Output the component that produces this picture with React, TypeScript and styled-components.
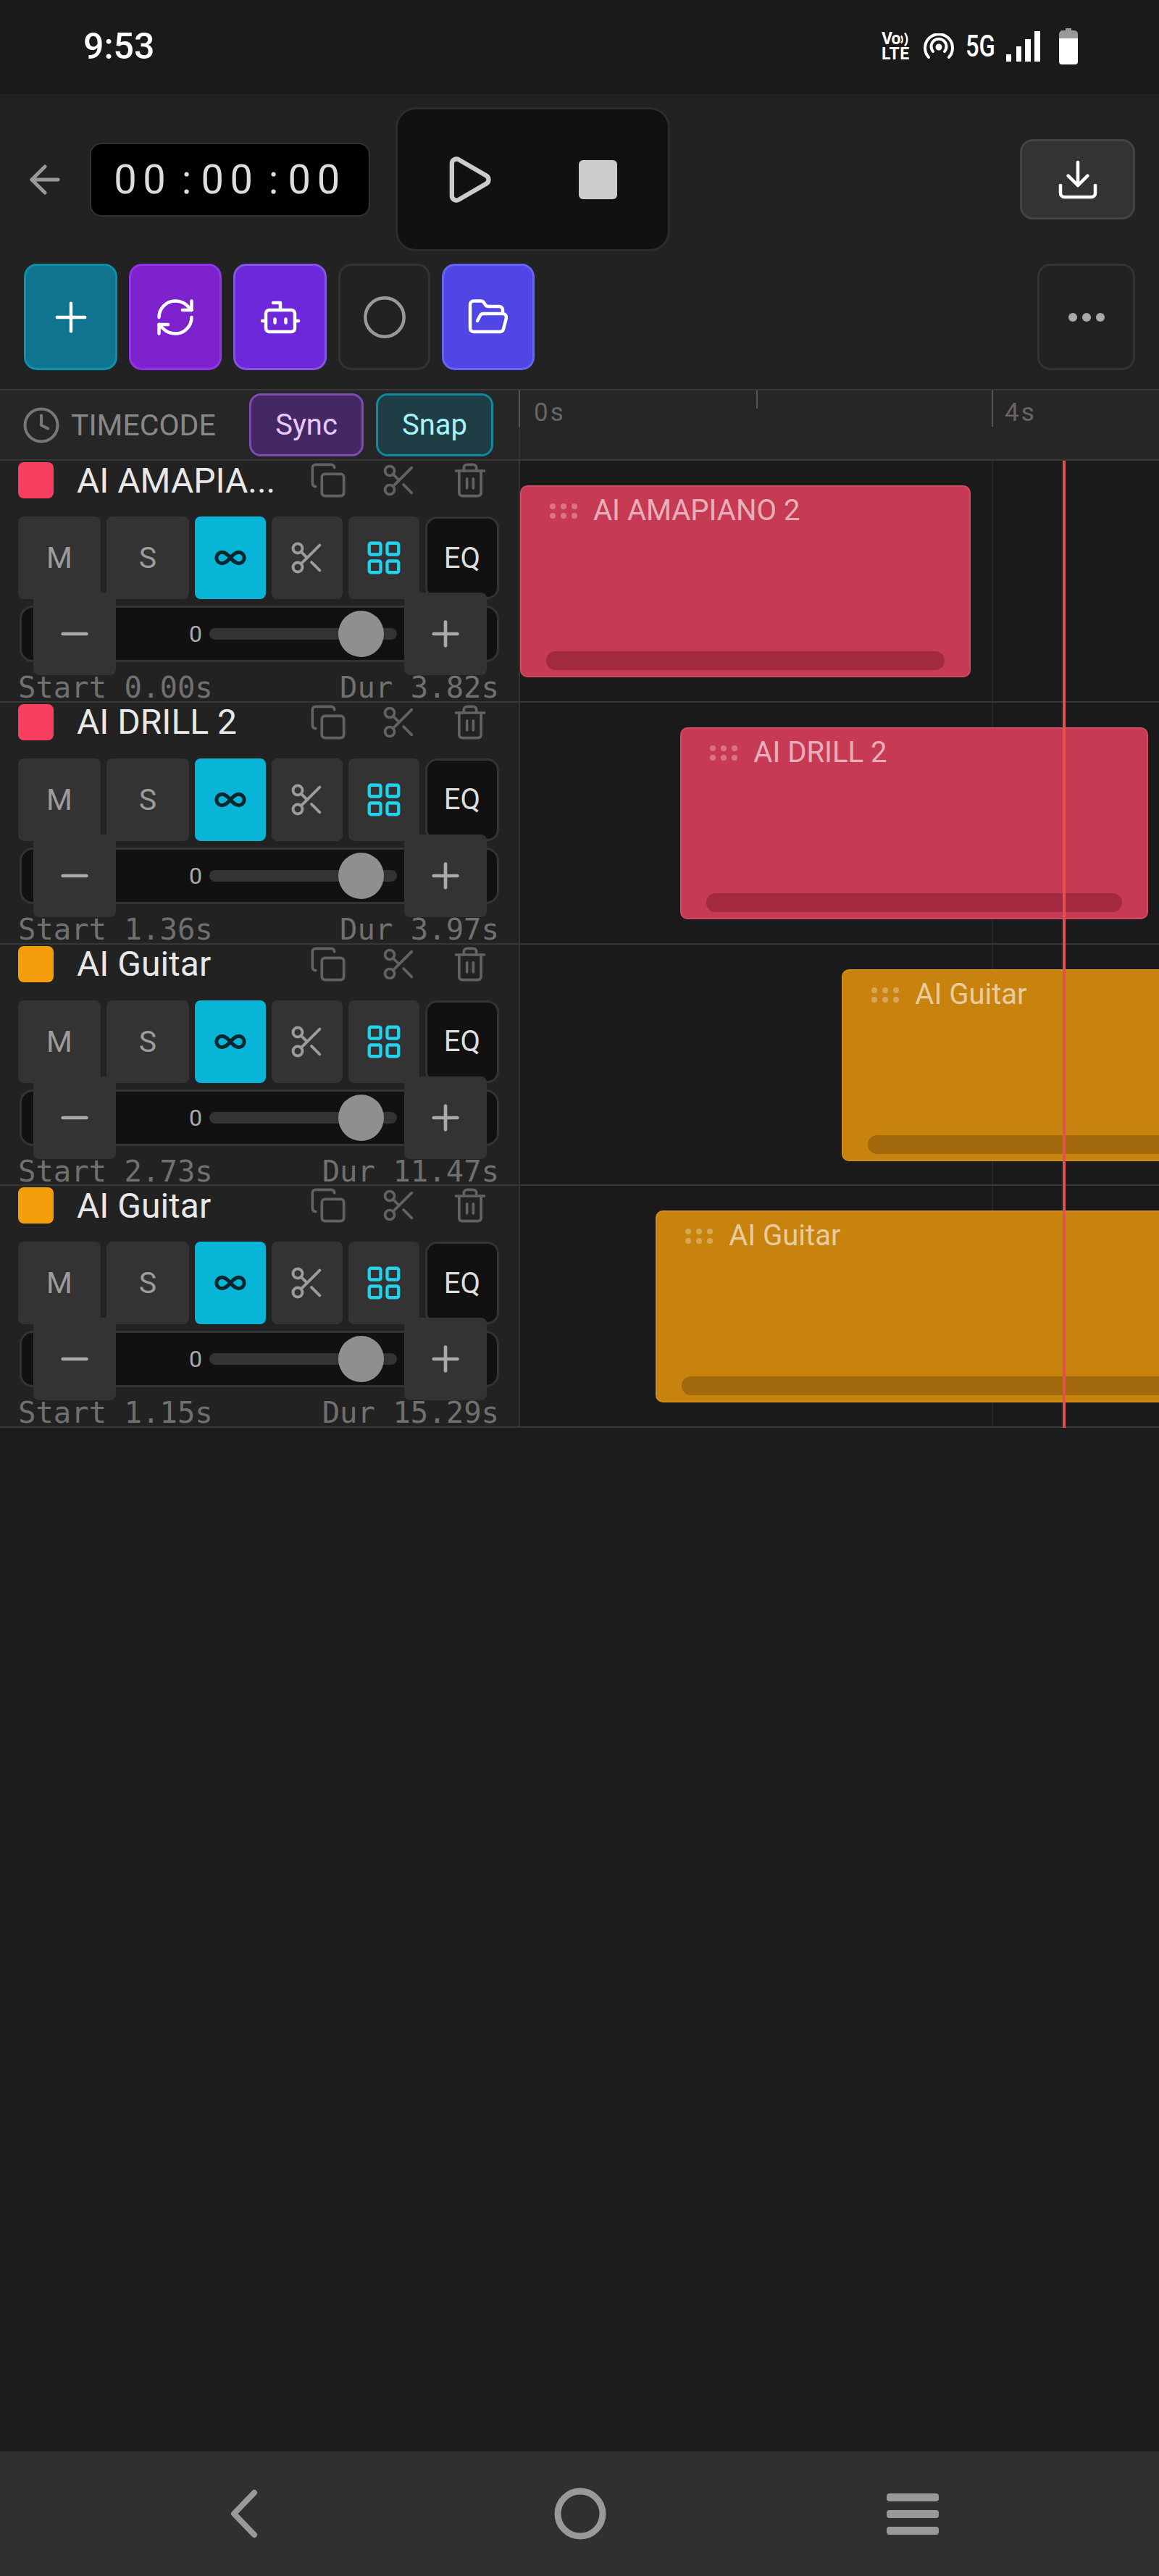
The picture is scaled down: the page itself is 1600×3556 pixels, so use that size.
import React from 'react';
import styled, { createGlobalStyle } from 'styled-components';
import {
  ArrowLeft,
  Bot,
  Circle,
  Clock,
  Copy,
  Download,
  FolderOpen,
  Infinity as InfinityIcon,
  LayoutGrid,
  Minus,
  Play,
  Plus,
  RefreshCw,
  Scissors,
  Trash2,
} from 'lucide-react';

const PX_PER_SECOND = 162.75;
const PLAYHEAD_X = 1467;

type TrackData = {
  short: string;
  name: string;
  start: number;
  dur: number;
  tone: 'rose' | 'amber';
};

const TRACKS: TrackData[] = [
  { short: 'AI AMAPIA...', name: 'AI AMAPIANO 2', start: 0, dur: 3.82, tone: 'rose' },
  { short: 'AI DRILL 2', name: 'AI DRILL 2', start: 1.36, dur: 3.97, tone: 'rose' },
  { short: 'AI Guitar', name: 'AI Guitar', start: 2.73, dur: 11.47, tone: 'amber' },
  { short: 'AI Guitar', name: 'AI Guitar', start: 1.15, dur: 15.29, tone: 'amber' },
];

const TONES = {
  rose: { swatch: '#f93f60', clip: '#c63a54', edge: '#d14a63', bar: '#a32a3e' },
  amber: { swatch: '#f59e0b', clip: '#c8820e', edge: '#d08c1c', bar: '#a1690c' },
};

const TOOL_TONES = {
  teal: { bg: '#0e7490', border: '#0e8fae' },
  fuchsia: { bg: '#7e22ce', border: '#9333ea' },
  violet: { bg: '#6d28d9', border: '#8355e0' },
  ghost: { bg: 'transparent', border: '#333333' },
  indigo: { bg: '#4f46e5', border: '#6366f1' },
};

const GlobalStyle = createGlobalStyle`
  html, body {
    margin: 0;
    padding: 0;
    background: #1c1c1c;
  }
  * {
    box-sizing: border-box;
  }
`;

const Page = styled.div`
  width: 1600px;
  height: 3556px;
  display: flex;
  flex-direction: column;
  overflow: hidden;
  background: #1c1c1c;
  font-family: Roboto, 'Liberation Sans', sans-serif;
`;

const StatusBar = styled.div`
  height: 130px;
  display: flex;
  align-items: center;
  justify-content: space-between;
  padding: 0 112px 0 115px;
  background: #1a1a1a;
  color: #ffffff;
`;

const Time = styled.span`
  font-size: 50px;
  font-weight: 500;
  margin-top: -2px;
`;

const StatusIcons = styled.div`
  display: flex;
  align-items: center;
  gap: 16px;
  margin-top: -2px;
`;

const Volte = styled.div`
  width: 42px;
  font-size: 23px;
  line-height: 21px;
  font-weight: 700;
  letter-spacing: 0.5px;
`;

const VolteTop = styled.div`
  display: flex;
  align-items: center;
  letter-spacing: -1px;
`;

const FiveG = styled.span`
  width: 40px;
  font-size: 42px;
  line-height: 42px;
  font-weight: 500;
  white-space: nowrap;
  transform: scaleX(0.78);
  transform-origin: left center;
`;

const BatteryWrap = styled.div`
  display: flex;
  margin-left: 10px;
`;

const Toolbar = styled.div`
  height: 407px;
  display: flex;
  flex-direction: column;
  gap: 17px;
  padding: 18px 33px 0 0;
  background: #222222;
`;

const TransportRow = styled.div`
  display: flex;
  align-items: center;
  padding-left: 31px;
`;

const BackButton = styled.div`
  display: flex;
  width: 62px;
  margin-right: 31px;
  color: #999999;
`;

const TimeDisplay = styled.div`
  width: 387px;
  height: 102px;
  display: flex;
  align-items: center;
  justify-content: center;
  background: #000000;
  border: 2px solid #333333;
  border-radius: 16px;
  color: #dddddd;
  font-size: 56px;
  letter-spacing: 8.6px;
  font-variant-numeric: tabular-nums;
`;

const TimeColon = styled.span`
  display: inline-block;
  width: 40px;
  letter-spacing: 0;
  text-align: center;
`;

const TransportPanel = styled.div`
  width: 379px;
  height: 199px;
  margin-left: 35px;
  display: flex;
  align-items: center;
  gap: 115px;
  padding-left: 59px;
  background: #111111;
  border: 3px solid #2c2c2c;
  border-radius: 28px;
  color: #cccccc;
`;

const StopSquare = styled.div`
  width: 53px;
  height: 54px;
  border-radius: 6px;
  background: #cccccc;
`;

const SaveButton = styled.div`
  width: 159px;
  height: 111px;
  margin-left: auto;
  display: flex;
  align-items: center;
  justify-content: center;
  background: #333333;
  border: 3px solid #444444;
  border-radius: 18px;
  color: #ffffff;
`;

const ToolRow = styled.div`
  display: flex;
  gap: 16px;
  padding-left: 33px;
`;

const ToolButton = styled.div<{ $tone: keyof typeof TOOL_TONES; $width: number }>`
  width: ${(p) => p.$width}px;
  height: 147px;
  display: flex;
  align-items: center;
  justify-content: center;
  background: ${(p) => TOOL_TONES[p.$tone].bg};
  border: 3px solid ${(p) => TOOL_TONES[p.$tone].border};
  border-radius: 18px;
  color: #ffffff;
`;

const MoreButton = styled.div`
  width: 135px;
  height: 147px;
  margin-left: auto;
  display: flex;
  align-items: center;
  justify-content: center;
  gap: 7px;
  border: 3px solid #333333;
  border-radius: 18px;
`;

const MoreDot = styled.span`
  width: 12px;
  height: 12px;
  border-radius: 50%;
  background: #aaaaaa;
`;

const HeaderRow = styled.div`
  height: 99px;
  display: flex;
  background: #262626;
  border-top: 2px solid #383838;
  border-bottom: 2px solid #383838;
`;

const HeaderLeft = styled.div`
  width: 718px;
  display: flex;
  align-items: center;
  padding-left: 30px;
  border-right: 2px solid #333333;
`;

const ClockWrap = styled.div`
  display: flex;
  color: #777777;
`;

const TimecodeLabel = styled.span`
  margin-left: 14px;
  width: 246px;
  font-size: 41px;
  color: #888888;
`;

const Chip = styled.div<{ $bg: string; $border: string; $color: string; $width: number }>`
  width: ${(p) => p.$width}px;
  height: 87px;
  margin-right: 17px;
  display: flex;
  align-items: center;
  justify-content: center;
  background: ${(p) => p.$bg};
  border: 3px solid ${(p) => p.$border};
  border-radius: 16px;
  color: ${(p) => p.$color};
  font-size: 40px;
`;

const Ruler = styled.div`
  flex: 1;
  position: relative;
`;

const Tick = styled.div<{ $major?: boolean }>`
  position: absolute;
  top: 0;
  width: 2px;
  height: ${(p) => (p.$major ? 50 : 25)}px;
  background: #555555;
`;

const TickLabel = styled.span`
  position: absolute;
  top: 10px;
  font-size: 35px;
  letter-spacing: 3px;
  color: #666666;
`;

const Tracks = styled.div`
  position: relative;
`;

const Playhead = styled.div`
  position: absolute;
  top: 0;
  bottom: 0;
  width: 4px;
  background: #e4504e;
`;

const TrackRow = styled.div`
  height: 333.75px;
  display: flex;
  border-bottom: 2px solid #383838;
`;

const TrackHead = styled.div`
  width: 718px;
  padding: 2px 27px 0 25px;
  background: #222222;
  border-right: 2px solid #333333;
`;

const NameRow = styled.div`
  height: 50px;
  display: flex;
  align-items: center;
`;

const Swatch = styled.div<{ $color: string }>`
  width: 49px;
  height: 50px;
  border-radius: 8px;
  background: ${(p) => p.$color};
`;

const TrackName = styled.span`
  margin-left: 32px;
  font-size: 48px;
  color: #e8e8e8;
  white-space: nowrap;
`;

const TrackActions = styled.div`
  margin-left: auto;
  margin-right: 14px;
  display: flex;
  gap: 46px;
  color: #626262;
`;

const Controls = styled.div`
  height: 114px;
  margin-top: 25px;
  display: flex;
  gap: 8px;
`;

const ControlButton = styled.div<{ $wide?: boolean; $active?: boolean; $accent?: boolean }>`
  width: ${(p) => (p.$wide ? 114 : 98)}px;
  display: flex;
  align-items: center;
  justify-content: center;
  border-radius: 8px;
  background: ${(p) => (p.$active ? '#08b5d6' : '#333333')};
  color: ${(p) => (p.$active ? '#04262e' : p.$accent ? '#22d3ee' : '#9c9c9c')};
  font-size: 41px;
`;

const EqButton = styled.div`
  width: 102px;
  display: flex;
  align-items: center;
  justify-content: center;
  background: #111111;
  border: 3px solid #333333;
  border-radius: 16px;
  color: #dddddd;
  font-size: 40px;
`;

const SliderRow = styled.div`
  height: 78px;
  margin: 9px 0 0 2px;
  display: flex;
  align-items: center;
  padding: 0 14px 0 16px;
  background: #111111;
  border: 3px solid #333333;
  border-radius: 18px;
`;

const StepButton = styled.div`
  flex: none;
  width: 114px;
  height: 114px;
  display: flex;
  align-items: center;
  justify-content: center;
  border-radius: 8px;
  background: #333333;
  color: #aaaaaa;
`;

const SliderBody = styled.div`
  flex: 1;
  display: flex;
  align-items: center;
  justify-content: flex-end;
  gap: 10px;
  padding-right: 10px;
`;

const GainValue = styled.span`
  font-size: 32px;
  color: #aaaaaa;
`;

const SliderTrack = styled.div`
  position: relative;
  width: 259px;
  height: 16px;
  border-radius: 8px;
  background: #333333;
`;

const SliderThumb = styled.div`
  position: absolute;
  top: -24px;
  left: 178px;
  width: 63px;
  height: 64px;
  border-radius: 50%;
  background: #8f8f8f;
`;

const Stats = styled.div`
  margin-top: 11px;
  display: flex;
  justify-content: space-between;
  font-family: 'DejaVu Sans Mono', 'Liberation Mono', monospace;
  font-size: 40.6px;
  line-height: 48px;
  color: #707070;
`;

const Lane = styled.div`
  flex: 1;
  position: relative;
  overflow: hidden;
  background: #1a1a1a;
`;

const GridLine = styled.div`
  position: absolute;
  top: 0;
  bottom: 0;
  width: 2px;
  background: #252525;
`;

const Clip = styled.div<{ $tone: 'rose' | 'amber' }>`
  position: absolute;
  top: 34px;
  height: 265px;
  padding: 23px 0 0 39px;
  display: flex;
  gap: 22px;
  background: ${(p) => TONES[p.$tone].clip};
  border: 2px solid ${(p) => TONES[p.$tone].edge};
  border-radius: 10px;
`;

const Grip = styled.div`
  display: grid;
  grid-template-columns: repeat(3, 8px);
  grid-auto-rows: 8px;
  gap: 5px 7px;
  align-content: start;
`;

const GripDot = styled.span`
  border-radius: 50%;
  background: rgba(255, 255, 255, 0.3);
`;

const ClipName = styled.span`
  margin-top: -14px;
  font-size: 40px;
  line-height: 47px;
  color: rgba(255, 255, 255, 0.62);
  white-space: nowrap;
`;

const ClipHandle = styled.div<{ $tone: 'rose' | 'amber' }>`
  position: absolute;
  left: 34px;
  right: 34px;
  bottom: 8px;
  height: 26px;
  border-radius: 13px;
  background: ${(p) => TONES[p.$tone].bar};
`;

const Spacer = styled.div`
  flex: 1;
`;

const NavBar = styled.div`
  height: 172px;
  display: flex;
  align-items: center;
  padding-left: 313px;
  background: #303030;
`;

const NavHomeWrap = styled.div`
  display: flex;
  margin-left: 408px;
`;

const NavMenu = styled.div`
  display: flex;
  flex-direction: column;
  gap: 12px;
  width: 72px;
  margin-left: 387px;
`;

const NavMenuBar = styled.span`
  height: 11px;
  border-radius: 4px;
  background: #999999;
`;

function HotspotIcon() {
  return (
    <svg width="42" height="36" viewBox="0 0 42 36" fill="none" stroke="#fff" strokeWidth="4" strokeLinecap="round">
      <circle cx="21" cy="19" r="4.5" fill="#fff" stroke="none" />
      <path d="M13 25a10.5 10.5 0 1 1 16 0" />
      <path d="M7 33a19 19 0 1 1 28 0" />
    </svg>
  );
}

function SignalIcon() {
  return (
    <svg width="47" height="42" viewBox="0 0 47 42" fill="#fff">
      <rect x="0" y="32" width="7" height="10" />
      <rect x="14" y="21" width="7" height="21" />
      <rect x="26" y="11" width="8" height="31" />
      <rect x="39" y="0" width="8" height="42" />
    </svg>
  );
}

function BatteryIcon() {
  return (
    <svg width="26" height="50" viewBox="0 0 26 50">
      <path d="M9 0h8v3h4a5 5 0 0 1 5 5v6H0V8a5 5 0 0 1 5-5h4z" fill="#999" />
      <path d="M0 14h26v32a4 4 0 0 1-4 4H4a4 4 0 0 1-4-4z" fill="#fff" />
    </svg>
  );
}

function NavBack() {
  return (
    <svg width="44" height="70" viewBox="0 0 44 70" fill="none" stroke="#999" strokeWidth="8" strokeLinecap="round" strokeLinejoin="round">
      <path d="M38 6 10 35l28 29" />
    </svg>
  );
}

function NavHome() {
  return (
    <svg width="72" height="72" viewBox="0 0 72 72" fill="none" stroke="#999" strokeWidth="9">
      <circle cx="36" cy="36" r="31" />
    </svg>
  );
}

function Track({ track }: { track: TrackData }) {
  const tone = TONES[track.tone];
  return (
    <TrackRow>
      <TrackHead>
        <NameRow>
          <Swatch $color={tone.swatch} />
          <TrackName>{track.short}</TrackName>
          <TrackActions>
            <Copy size={52} strokeWidth={1.7} />
            <Scissors size={52} strokeWidth={1.7} />
            <Trash2 size={52} strokeWidth={1.7} />
          </TrackActions>
        </NameRow>
        <Controls>
          <ControlButton $wide>M</ControlButton>
          <ControlButton $wide>S</ControlButton>
          <ControlButton $active>
            <InfinityIcon size={46} strokeWidth={2.6} />
          </ControlButton>
          <ControlButton>
            <Scissors size={52} strokeWidth={1.8} />
          </ControlButton>
          <ControlButton $accent>
            <LayoutGrid size={54} strokeWidth={1.9} />
          </ControlButton>
          <EqButton>EQ</EqButton>
        </Controls>
        <SliderRow>
          <StepButton>
            <Minus size={56} strokeWidth={2} />
          </StepButton>
          <SliderBody>
            <GainValue>0</GainValue>
            <SliderTrack>
              <SliderThumb />
            </SliderTrack>
          </SliderBody>
          <StepButton>
            <Plus size={56} strokeWidth={2} />
          </StepButton>
        </SliderRow>
        <Stats>
          <span>Start {track.start.toFixed(2)}s</span>
          <span>Dur {track.dur.toFixed(2)}s</span>
        </Stats>
      </TrackHead>
      <Lane>
        <GridLine style={{ left: 4 * PX_PER_SECOND }} />
        <Clip
          $tone={track.tone}
          style={{ left: track.start * PX_PER_SECOND, width: track.dur * PX_PER_SECOND }}
        >
          <Grip>
            {Array.from({ length: 6 }, (_, i) => (
              <GripDot key={i} />
            ))}
          </Grip>
          <ClipName>{track.name}</ClipName>
          <ClipHandle $tone={track.tone} />
        </Clip>
      </Lane>
    </TrackRow>
  );
}

export default function App() {
  return (
    <>
      <GlobalStyle />
      <Page>
        <StatusBar>
          <Time>9:53</Time>
          <StatusIcons>
            <Volte>
              <VolteTop>
                Vo
                <svg width="14" height="21" viewBox="0 0 14 20" fill="none" stroke="#fff" strokeWidth="2.4">
                  <path d="M1 6a8 8 0 0 1 0 10" />
                  <path d="M6 2a14 14 0 0 1 0 18" />
                </svg>
              </VolteTop>
              LTE
            </Volte>
            <HotspotIcon />
            <FiveG>5G</FiveG>
            <SignalIcon />
            <BatteryWrap>
              <BatteryIcon />
            </BatteryWrap>
          </StatusIcons>
        </StatusBar>

        <Toolbar>
          <TransportRow>
            <BackButton>
              <ArrowLeft size={62} strokeWidth={1.9} />
            </BackButton>
            <TimeDisplay>
              00<TimeColon>:</TimeColon>00<TimeColon>:</TimeColon>00
            </TimeDisplay>
            <TransportPanel>
              <Play size={76} strokeWidth={2} />
              <StopSquare />
            </TransportPanel>
            <SaveButton>
              <Download size={64} strokeWidth={1.7} />
            </SaveButton>
          </TransportRow>
          <ToolRow>
            <ToolButton $tone="teal" $width={129}>
              <Plus size={66} strokeWidth={1.6} />
            </ToolButton>
            <ToolButton $tone="fuchsia" $width={128}>
              <RefreshCw size={60} strokeWidth={1.8} />
            </ToolButton>
            <ToolButton $tone="violet" $width={129}>
              <Bot size={60} strokeWidth={1.8} />
            </ToolButton>
            <ToolButton $tone="ghost" $width={127}>
              <Circle size={64} strokeWidth={1.7} color="#999999" />
            </ToolButton>
            <ToolButton $tone="indigo" $width={128}>
              <FolderOpen size={60} strokeWidth={1.8} />
            </ToolButton>
            <MoreButton>
              <MoreDot />
              <MoreDot />
              <MoreDot />
            </MoreButton>
          </ToolRow>
        </Toolbar>

        <HeaderRow>
          <HeaderLeft>
            <ClockWrap>
              <Clock size={54} strokeWidth={1.8} />
            </ClockWrap>
            <TimecodeLabel>TIMECODE</TimecodeLabel>
            <Chip $bg="#432863" $border="#7e4bb5" $color="#e9c9ff" $width={158}>
              Sync
            </Chip>
            <Chip $bg="#1f3d44" $border="#0e8a9e" $color="#a5f3fc" $width={162}>
              Snap
            </Chip>
          </HeaderLeft>
          <Ruler>
            <Tick $major style={{ left: -2 }} />
            <TickLabel style={{ left: 19 }}>0s</TickLabel>
            <Tick style={{ left: 2 * PX_PER_SECOND }} />
            <Tick $major style={{ left: 4 * PX_PER_SECOND }} />
            <TickLabel style={{ left: 4 * PX_PER_SECOND + 18 }}>4s</TickLabel>
          </Ruler>
        </HeaderRow>

        <Tracks>
          {TRACKS.map((track, i) => (
            <Track key={i} track={track} />
          ))}
          <Playhead style={{ left: PLAYHEAD_X }} />
        </Tracks>

        <Spacer />

        <NavBar>
          <NavBack />
          <NavHomeWrap>
            <NavHome />
          </NavHomeWrap>
          <NavMenu>
            <NavMenuBar />
            <NavMenuBar />
            <NavMenuBar />
          </NavMenu>
        </NavBar>
      </Page>
    </>
  );
}
